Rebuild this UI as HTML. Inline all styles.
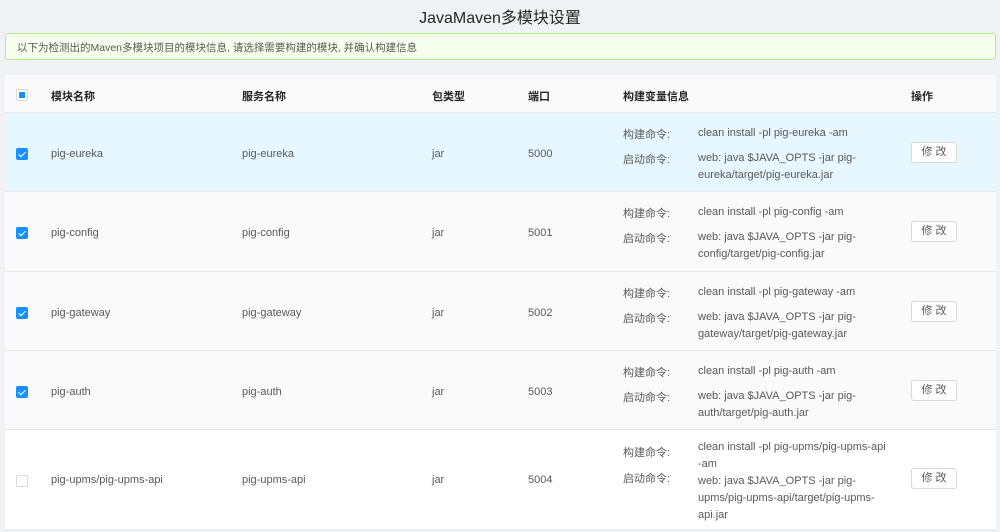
<!DOCTYPE html><html><head><meta charset="utf-8"><style>
*{margin:0;padding:0;box-sizing:border-box}
body{width:1000px;height:532px;background:#f0f2f5;font-family:"Liberation Sans","Noto Sans CJK SC",sans-serif;font-size:11px;color:#595959;position:relative;overflow:hidden}
.a{position:absolute;white-space:nowrap}
.title{left:0;width:1000px;text-align:center;top:4px;font-size:16px;color:#262626}
.alert{left:5px;top:33px;width:991px;height:27px;background:#f6ffed;border:1px solid #b7eb8f;border-radius:3px;padding:6px 0 0 11px;font-size:10.5px;color:#595959}
.tbl{position:absolute;left:5px;top:75px;width:991px;height:455px;background:#fff}
.row{position:absolute;left:0;width:991px;border-bottom:1px solid #e8e8e8}
.cb{position:absolute;left:11px;width:12px;height:12px;border:1px solid #d9d9d9;border-radius:2px;background:#fff}
.cb.on{background:#1890ff;border-color:#1890ff}
.cb.on:after{content:"";position:absolute;left:3px;top:1px;width:3px;height:6px;border:solid #fff;border-width:0 1.5px 1.5px 0;transform:rotate(45deg)}
.btn{position:absolute;left:906px;width:46px;height:21px;border:1px solid #d9d9d9;border-radius:3px;background:#fff;text-align:center;line-height:19px;font-size:11px;color:#595959}
.h{color:#262626;font-weight:bold}
.v{position:absolute;left:693px;width:190px;line-height:17px;white-space:normal}
</style></head><body>
<div class="a title">JavaMaven多模块设置</div>
<div class="a alert">以下为检测出的Maven多模块项目的模块信息, 请选择需要构建的模块, 并确认构建信息</div>
<div class="tbl">
<div class="row" style="top:0;height:38px;background:#fafafa">
<div class="cb" style="top:14px"><div style="position:absolute;left:2px;top:2px;width:6px;height:6px;background:#1890ff"></div></div>
<div class="a h" style="left:46px;top:13px">模块名称</div><div class="a h" style="left:237px;top:13px">服务名称</div><div class="a h" style="left:427px;top:13px">包类型</div><div class="a h" style="left:523px;top:13px">端口</div><div class="a h" style="left:618px;top:13px">构建变量信息</div><div class="a h" style="left:906px;top:13px">操作</div>
</div>

<div class="row" style="top:38px;height:79px;background:#e6f7ff">
<div class="cb on" style="top:35px"></div>
<div class="a" style="left:46px;top:35px">pig-eureka</div><div class="a" style="left:237px;top:35px">pig-eureka</div><div class="a" style="left:427px;top:35px">jar</div><div class="a" style="left:523px;top:35px">5000</div>
<div class="a" style="left:618px;top:13px">构建命令:</div><div class="v" style="top:12px">clean install -pl pig-eureka -am</div>
<div class="a" style="left:618px;top:38px">启动命令:</div><div class="v" style="top:37px">web: java $JAVA_OPTS -jar pig-eureka/target/pig-eureka.jar</div>
<div class="btn" style="top:29px">修 改</div></div>

<div class="row" style="top:117px;height:80px;background:#fafafa">
<div class="cb on" style="top:35px"></div>
<div class="a" style="left:46px;top:35px">pig-config</div><div class="a" style="left:237px;top:35px">pig-config</div><div class="a" style="left:427px;top:35px">jar</div><div class="a" style="left:523px;top:35px">5001</div>
<div class="a" style="left:618px;top:13px">构建命令:</div><div class="v" style="top:12px">clean install -pl pig-config -am</div>
<div class="a" style="left:618px;top:38px">启动命令:</div><div class="v" style="top:37px">web: java $JAVA_OPTS -jar pig-config/target/pig-config.jar</div>
<div class="btn" style="top:29px">修 改</div></div>

<div class="row" style="top:197px;height:79px;background:#fafafa">
<div class="cb on" style="top:35px"></div>
<div class="a" style="left:46px;top:35px">pig-gateway</div><div class="a" style="left:237px;top:35px">pig-gateway</div><div class="a" style="left:427px;top:35px">jar</div><div class="a" style="left:523px;top:35px">5002</div>
<div class="a" style="left:618px;top:13px">构建命令:</div><div class="v" style="top:12px">clean install -pl pig-gateway -am</div>
<div class="a" style="left:618px;top:38px">启动命令:</div><div class="v" style="top:37px">web: java $JAVA_OPTS -jar pig-gateway/target/pig-gateway.jar</div>
<div class="btn" style="top:29px">修 改</div></div>

<div class="row" style="top:276px;height:79px;background:#fafafa">
<div class="cb on" style="top:35px"></div>
<div class="a" style="left:46px;top:35px">pig-auth</div><div class="a" style="left:237px;top:35px">pig-auth</div><div class="a" style="left:427px;top:35px">jar</div><div class="a" style="left:523px;top:35px">5003</div>
<div class="a" style="left:618px;top:13px">构建命令:</div><div class="v" style="top:12px">clean install -pl pig-auth -am</div>
<div class="a" style="left:618px;top:38px">启动命令:</div><div class="v" style="top:37px">web: java $JAVA_OPTS -jar pig-auth/target/pig-auth.jar</div>
<div class="btn" style="top:29px">修 改</div></div>

<div class="row" style="top:355px;height:100px;background:#fff">
<div class="cb" style="top:45px"></div>
<div class="a" style="left:46px;top:44px">pig-upms/pig-upms-api</div><div class="a" style="left:237px;top:44px">pig-upms-api</div><div class="a" style="left:427px;top:44px">jar</div><div class="a" style="left:523px;top:44px">5004</div>
<div class="a" style="left:618px;top:14px">构建命令:</div><div class="v" style="top:9px">clean install -pl pig-upms/pig-upms-api -am</div>
<div class="a" style="left:618px;top:40px">启动命令:</div><div class="v" style="top:43px">web: java $JAVA_OPTS -jar pig-upms/pig-upms-api/target/pig-upms-api.jar</div>
<div class="btn" style="top:38px">修 改</div></div>
</div>
</body></html>
